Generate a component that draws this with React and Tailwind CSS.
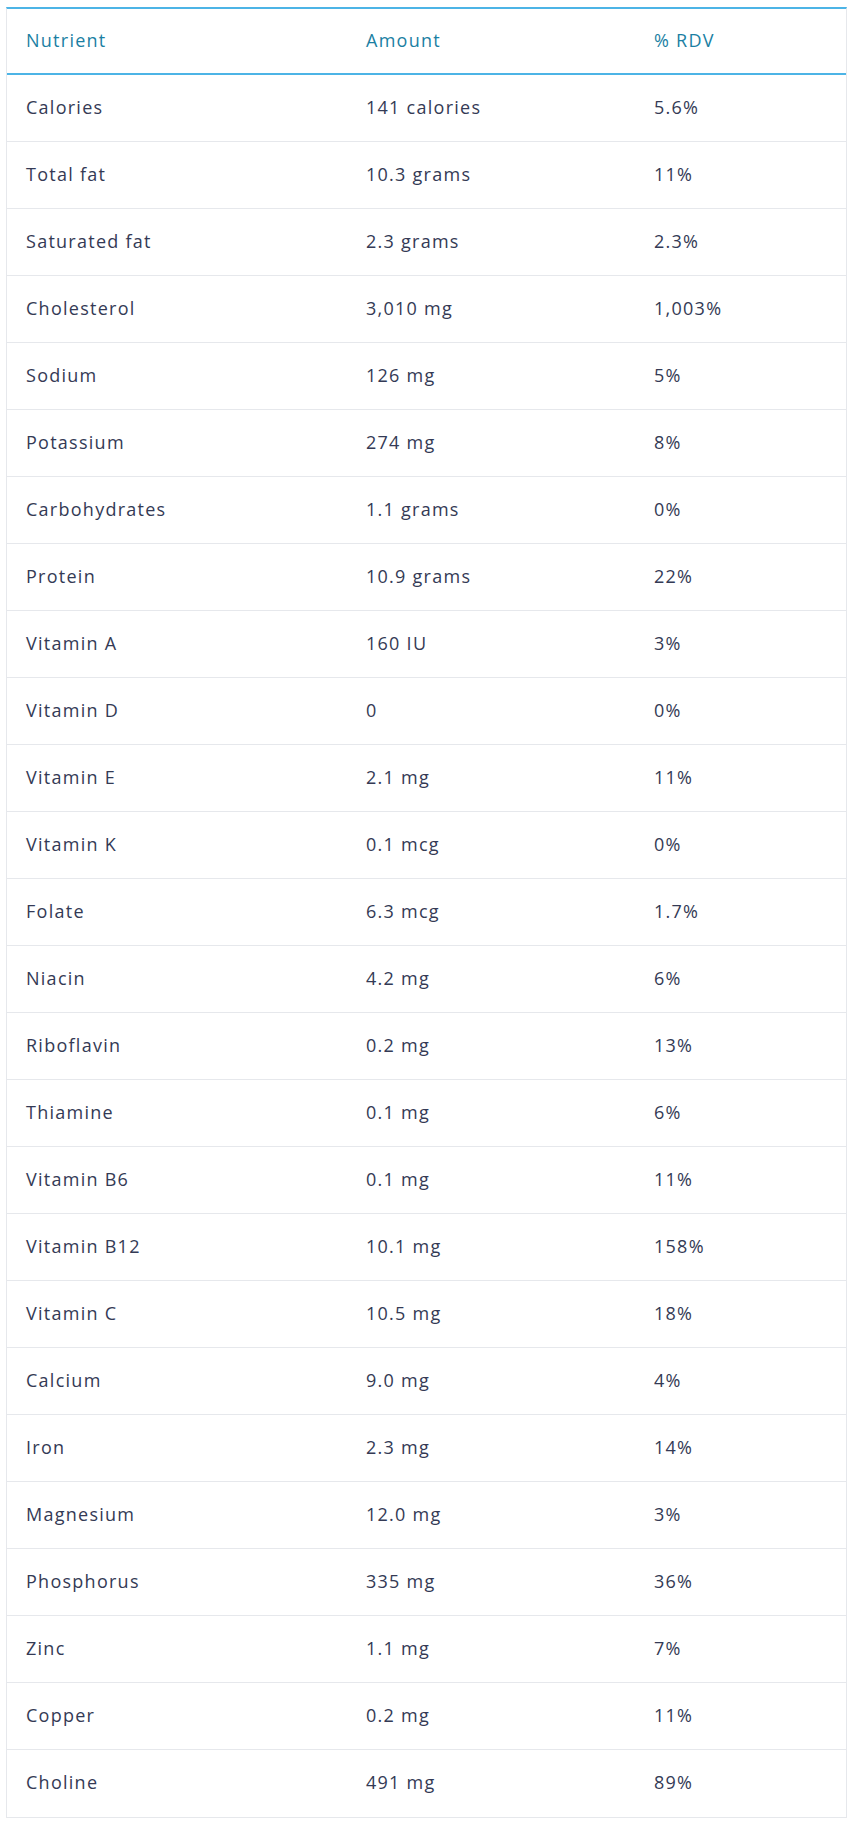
import React from 'react';

const rows = [
    ['Calories', '141 calories', '5.6%'],
    ['Total fat', '10.3 grams', '11%'],
    ['Saturated fat', '2.3 grams', '2.3%'],
    ['Cholesterol', '3,010 mg', '1,003%'],
    ['Sodium', '126 mg', '5%'],
    ['Potassium', '274 mg', '8%'],
    ['Carbohydrates', '1.1 grams', '0%'],
    ['Protein', '10.9 grams', '22%'],
    ['Vitamin A', '160 IU', '3%'],
    ['Vitamin D', '0', '0%'],
    ['Vitamin E', '2.1 mg', '11%'],
    ['Vitamin K', '0.1 mcg', '0%'],
    ['Folate', '6.3 mcg', '1.7%'],
    ['Niacin', '4.2 mg', '6%'],
    ['Riboflavin', '0.2 mg', '13%'],
    ['Thiamine', '0.1 mg', '6%'],
    ['Vitamin B6', '0.1 mg', '11%'],
    ['Vitamin B12', '10.1 mg', '158%'],
    ['Vitamin C', '10.5 mg', '18%'],
    ['Calcium', '9.0 mg', '4%'],
    ['Iron', '2.3 mg', '14%'],
    ['Magnesium', '12.0 mg', '3%'],
    ['Phosphorus', '335 mg', '36%'],
    ['Zinc', '1.1 mg', '7%'],
    ['Copper', '0.2 mg', '11%'],
    ['Choline', '491 mg', '89%'],
];

function App() {
    return (
        <div className="bg-white min-h-screen pt-[7px] pl-[6px] pr-[11px] font-['Open_Sans',sans-serif] text-[18px] tracking-[0.07em]">
            <div className="border-x border-[#e6e8ec] border-t-2 border-t-[#4cb4e6] border-b border-b-[#e6e8ec]">
                <div className="grid grid-cols-[340px_288px_1fr] h-[66px] items-center border-b-2 border-[#4cb4e6] text-[#1b7fa3]">
                    <p className="pl-[19px] -mt-[2px]">Nutrient</p>
                    <p className="pl-[19px] -mt-[2px]">Amount</p>
                    <p className="pl-[19px] -mt-[2px]">% RDV</p>
                </div>
                {rows.map((r, i) => (
                    <div
                        key={r[0]}
                        className={
                            'grid grid-cols-[340px_288px_1fr] h-[67px] items-center text-[#343a55] ' +
                            (i < rows.length - 1 ? 'border-b border-[#e6e8ec]' : '')
                        }
                    >
                        <p className="pl-[19px] -mt-[2px]">{r[0]}</p>
                        <p className="pl-[19px] -mt-[2px]">{r[1]}</p>
                        <p className="pl-[19px] -mt-[2px]">{r[2]}</p>
                    </div>
                ))}
            </div>
        </div>
    );
}

export default App;
